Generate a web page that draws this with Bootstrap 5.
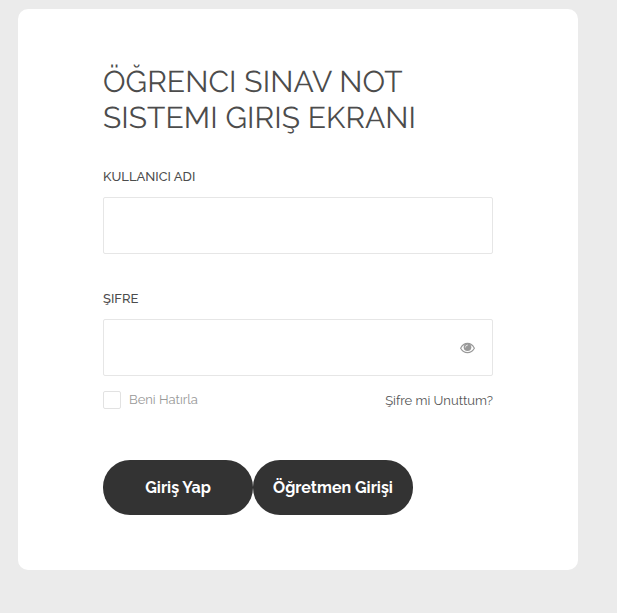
<!DOCTYPE html>
<html lang="tr">
<head>
<meta charset="utf-8">
<meta name="viewport" content="width=device-width, initial-scale=1">
<title>Öğrenci Sınav Not Sistemi</title>
<link href="https://cdn.jsdelivr.net/npm/bootstrap@5.3.0/dist/css/bootstrap.min.css" rel="stylesheet">
<style>
body{background:#ebebeb;font-family:Raleway,Lato,"Open Sans",sans-serif;color:#555;height:613px;overflow:hidden}
.login-wrap{width:560px;height:561px;margin:9px 0 0 18px;padding:49px 85px 55px;border-radius:10px}
.login-title{font-size:30px;line-height:36px;height:78px;padding-top:7px;color:#4c4c4c;white-space:nowrap;letter-spacing:.08px;text-rendering:geometricPrecision}
.user-group{margin-top:31px}
.pass-group{margin-top:35px}
.field-label{font-size:13px;line-height:20px;font-weight:500;color:#4c4c4c;margin-bottom:10px}
.field-box{height:57px;border:1px solid #e6e6e6;border-radius:2px;padding:0 20px}
.field-box:focus{border-color:#bbb;box-shadow:none}
.eye-btn{right:18px;top:0;height:57px;line-height:0;color:#999}
.options-row{height:18px;margin-top:15px;font-size:13px;line-height:18px}
.remember-box.form-check-input{width:18px;height:18px;border:1px solid #e2e2e2;border-radius:2px;margin:0 8px 0 0}
.remember-text{color:#999}
.forgot-link{color:#555;margin-top:1px}
.button-row{margin-top:51px}
.login-btn{height:55px;border-radius:27px;background:#333;color:#fff;font-size:16px;font-weight:700;padding:0;border:0}
.login-btn:hover{background:#555;color:#fff}
.btn-main{width:150px}
.btn-teacher{width:160px}
</style>
<script src="https://cdn.jsdelivr.net/npm/bootstrap@5.3.0/dist/js/bootstrap.bundle.min.js" defer></script>
</head>
<body>
<main class="login-wrap bg-white">
<form>
<h1 class="login-title fw-normal mb-0">ÖĞRENCI SINAV NOT<br>SISTEMI GIRIŞ EKRANI</h1>
<div class="user-group">
<label class="field-label d-block" for="user">KULLANICI ADI</label>
<input class="form-control field-box" id="user" type="text">
</div>
<div class="pass-group">
<label class="field-label d-block" for="pass">ŞIFRE</label>
<div class="position-relative">
<input class="form-control field-box" id="pass" type="password">
<span class="eye-btn position-absolute d-flex align-items-center">
<svg width="15" height="12" viewBox="0 0 15 12" fill="none" stroke="currentColor"><path d="M.6 6.200C2.200 3.200 4.700 1.400 7.500 1.400s5.300 1.800 6.900 4.800c-1.600 2.800-4.100 4.400-6.900 4.400S2.200 9 .6 6.200z" stroke-width="1.100"/><circle cx="7.500" cy="5.300" r="3.800" fill="currentColor" stroke="none"/><path d="M5.400 5.100A2.100 2.100 0 0 1 7.500 3" stroke="#fff" stroke-width=".7" stroke-linecap="round"/></svg>
</span>
</div>
</div>
<div class="options-row d-flex justify-content-between">
<div class="d-flex"><input class="form-check-input remember-box" type="checkbox" id="remember"><label class="remember-text" for="remember">Beni Hatırla</label></div>
<a class="forgot-link text-decoration-none" href="#">Şifre mi Unuttum?</a>
</div>
<div class="d-flex button-row">
<button class="btn login-btn btn-main" type="button">Giriş Yap</button>
<button class="btn login-btn btn-teacher" type="button">Öğretmen Girişi</button>
</div>
</form>
</main>
</body>
</html>
